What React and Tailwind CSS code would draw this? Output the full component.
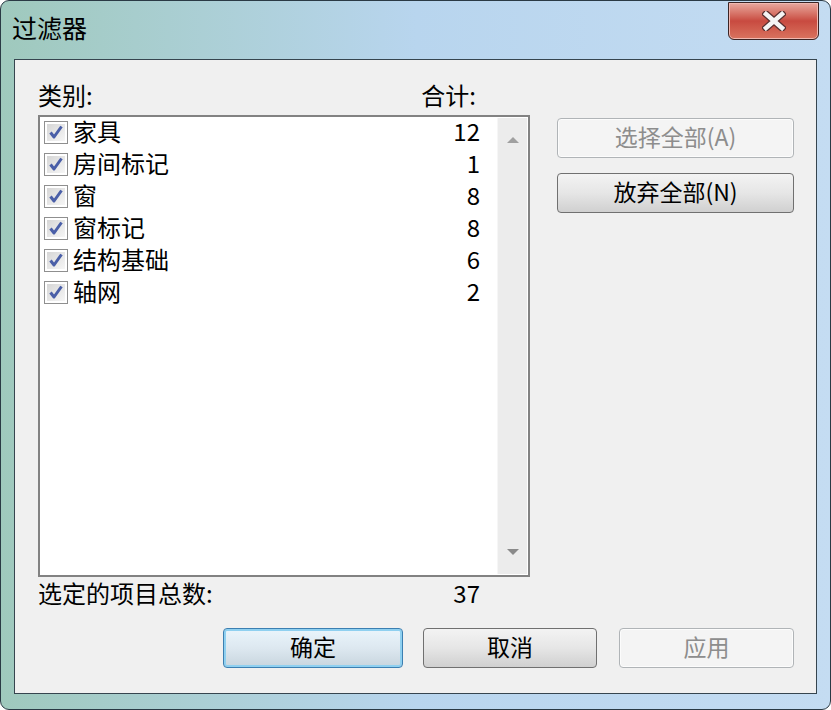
const font = { fontFamily: '"Noto Sans CJK SC", "Liberation Sans", sans-serif' };

const items = [
  { name: '家具', count: 12 },
  { name: '房间标记', count: 1 },
  { name: '窗', count: 8 },
  { name: '窗标记', count: 8 },
  { name: '结构基础', count: 6 },
  { name: '轴网', count: 2 },
];

function CheckBox() {
  return (
    <div className="flex h-[23px] w-[24px] shrink-0 items-center justify-center border border-[#8f8f8f] bg-white p-[2px]">
      <div className="flex h-full w-full items-center justify-center bg-gradient-to-br from-[#d6d6d6] to-[#f6f6f6]">
        <svg width="16" height="16" viewBox="0 0 16 16">
          <path d="M2.5 8.5 L6 13 L13.5 2.5" fill="none" stroke="#4a5fa8" strokeWidth="3" strokeLinejoin="round" />
        </svg>
      </div>
    </div>
  );
}

function Button({ label, variant = 'normal', className = '' }) {
  const styles = {
    normal: 'border-[#707070] bg-gradient-to-b from-[#f3f3f3] via-[#e6e6e6] to-[#d0d0d0] text-black',
    default:
      'border-[#3c7fb1] bg-gradient-to-b from-[#eaf5fc] via-[#dde8f0] to-[#c8d5de] text-black shadow-[inset_0_0_0_2px_#8fd0f0]',
    disabled: 'border-[#b0b4b7] bg-[#f4f4f4] text-[#8d8d8d] shadow-[inset_0_0_0_1px_#fcfcfc]',
  };
  return (
    <div
      className={`flex h-[40px] items-center justify-center rounded-[4px] border pb-[3px] text-[23px] ${styles[variant]} ${className}`}
    >
      {label}
    </div>
  );
}

export default function App() {
  return (
    <div
      style={font}
      className="flex h-[710px] w-[831px] flex-col overflow-hidden rounded-[9px] border border-[#2a3a45] bg-gradient-to-r from-[#9fc9bd] via-[#b8d5ee] to-[#c4dcf2]"
    >
      <div className="flex h-[58px] shrink-0 items-start justify-between pl-[11px] pr-[11px]">
        <div className="pt-[8px] text-[25px] leading-[36px] text-black">过滤器</div>
        <div className="mt-[1px] flex h-[38px] w-[91px] items-center justify-center rounded-b-[6px] border border-[#3b2424] bg-gradient-to-b from-[#e7a89f] via-[#c84a40] to-[#d9735f] shadow-[inset_0_0_0_1px_#f0b8b0]">
          <svg width="24" height="20" viewBox="0 0 24 20">
            <path d="M4 3 L20 17 M20 3 L4 17" stroke="#5a3030" strokeWidth="7" strokeLinecap="square" />
            <path d="M4 3 L20 17 M20 3 L4 17" stroke="#f4f4f4" strokeWidth="4.5" strokeLinecap="square" />
          </svg>
        </div>
      </div>

      <div className="mx-[13px] mb-[15px] flex flex-1 flex-col border border-[#36454f] bg-[#f0f0f0] pl-[23px] pr-[22px] pt-[20px]">
        <div className="flex">
          <div className="flex w-[492px] flex-col">
            <div className="flex h-[35px] text-[24px] leading-[30px] text-black">
              <span>类别:</span>
              <span className="ml-auto mr-[54px]">合计:</span>
            </div>
            <div className="flex h-[462px] border-2 border-[#828282] bg-white">
              <div className="-mt-[1px] flex flex-1 flex-col pl-[4px] pr-[17px]">
                {items.map((it) => (
                  <div key={it.name} className="flex h-[32px] items-center gap-[5px] text-[24px]">
                    <CheckBox />
                    <span className="pb-[2px] leading-none">{it.name}</span>
                    <span className="ml-auto pb-[2px] leading-none">{it.count}</span>
                  </div>
                ))}
              </div>
              <div className="my-[1px] mr-[1px] flex w-[30px] flex-col items-center justify-between border-l border-[#f6f6f6] bg-[#ececec] py-[19px]">
                <svg width="12" height="6" viewBox="0 0 12 6">
                  <path d="M0 6 L6 0 L12 6 Z" fill="#a0a0a0" />
                </svg>
                <svg width="12" height="6" viewBox="0 0 12 6">
                  <path d="M0 0 L12 0 L6 6 Z" fill="#8a8a8a" />
                </svg>
              </div>
            </div>
          </div>
          <div className="ml-[27px] flex flex-1 flex-col gap-[15px] pt-[38px]">
            <Button label="选择全部(A)" variant="disabled" />
            <Button label="放弃全部(N)" />
          </div>
        </div>

        <div className="flex h-[34px] w-[442px] items-center pb-[2px] text-[24px]">
          <span>选定的项目总数:</span>
          <span className="ml-auto">37</span>
        </div>

        <div className="mt-[17px] flex justify-end gap-[20px]">
          <Button label="确定" variant="default" className="w-[180px]" />
          <Button label="取消" className="w-[174px]" />
          <Button label="应用" variant="disabled" className="ml-[2px] w-[175px]" />
        </div>
      </div>
    </div>
  );
}
